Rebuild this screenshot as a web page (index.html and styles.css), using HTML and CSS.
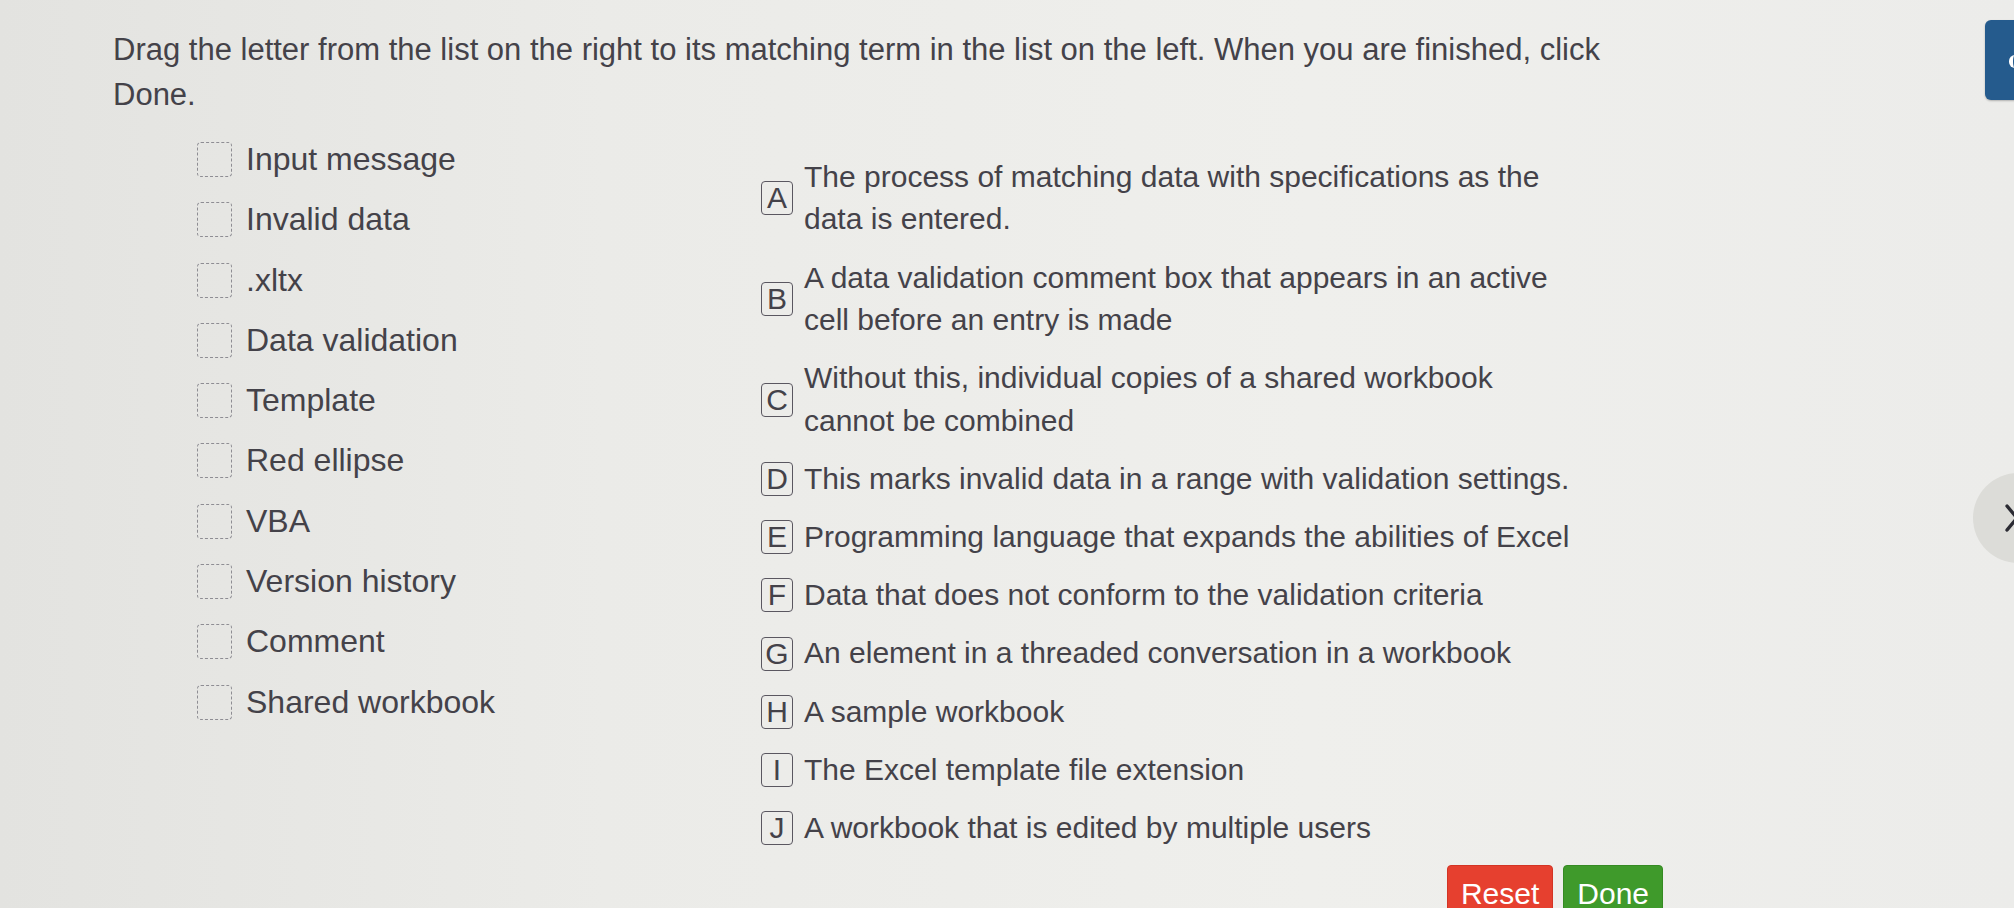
FILE: index.html
```html
<!DOCTYPE html>
<html lang="en">
<head>
<meta charset="utf-8">
<title>Matching</title>
<link rel="stylesheet" href="styles.css">
</head>
<body>
<main class="page">
  <p class="instructions">Drag the letter from the list on the right to its matching term in the list on the left. When you are finished, click Done.</p>
  <div class="match">
    <ul class="terms">
      <li class="term"><span class="drop"></span><span class="term-label">Input message</span></li>
      <li class="term"><span class="drop"></span><span class="term-label">Invalid data</span></li>
      <li class="term"><span class="drop"></span><span class="term-label">.xltx</span></li>
      <li class="term"><span class="drop"></span><span class="term-label">Data validation</span></li>
      <li class="term"><span class="drop"></span><span class="term-label">Template</span></li>
      <li class="term"><span class="drop"></span><span class="term-label">Red ellipse</span></li>
      <li class="term"><span class="drop"></span><span class="term-label">VBA</span></li>
      <li class="term"><span class="drop"></span><span class="term-label">Version history</span></li>
      <li class="term"><span class="drop"></span><span class="term-label">Comment</span></li>
      <li class="term"><span class="drop"></span><span class="term-label">Shared workbook</span></li>
    </ul>
    <ol class="defs">
      <li class="def"><span class="key">A</span><span class="def-text">The process of matching data with specifications as the data is entered.</span></li>
      <li class="def"><span class="key">B</span><span class="def-text">A data validation comment box that appears in an active cell before an entry is made</span></li>
      <li class="def"><span class="key">C</span><span class="def-text">Without this, individual copies of a shared workbook cannot be combined</span></li>
      <li class="def"><span class="key">D</span><span class="def-text">This marks invalid data in a range with validation settings.</span></li>
      <li class="def"><span class="key">E</span><span class="def-text">Programming language that expands the abilities of Excel</span></li>
      <li class="def"><span class="key">F</span><span class="def-text">Data that does not conform to the validation criteria</span></li>
      <li class="def"><span class="key">G</span><span class="def-text">An element in a threaded conversation in a workbook</span></li>
      <li class="def"><span class="key">H</span><span class="def-text">A sample workbook</span></li>
      <li class="def"><span class="key">I</span><span class="def-text">The Excel template file extension</span></li>
      <li class="def"><span class="key">J</span><span class="def-text">A workbook that is edited by multiple users</span></li>
    </ol>
  </div>
  <div class="actions">
    <button class="btn btn-reset" type="button">Reset</button>
    <button class="btn btn-done" type="button">Done</button>
  </div>
</main>
<div class="side-tab"><span class="side-tab-glyph"></span></div>
<button class="side-next" type="button" aria-label="Next">
  <svg viewBox="0 0 90 90" width="90" height="90"><path d="M34 33 L44 45 L34 57" fill="none" stroke="#2b2b33" stroke-width="3.5" stroke-linecap="round" stroke-linejoin="round"/></svg>
</button>
</body>
</html>
```

FILE: styles.css
```css
html, body {
  margin: 0;
  padding: 0;
  height: 100%;
  overflow: hidden;
}

body {
  background: linear-gradient(90deg, #e3e3e0 0%, #ebebe8 30%, #efefec 65%, #ececea 100%);
  font-family: "Liberation Sans", Arial, sans-serif;
  color: #444249;
}

.page {
  padding: 27px 0 0 113px;
}

.instructions {
  margin: 0;
  width: 1560px;
  font-size: 31px;
  line-height: 45px;
  color: #444249;
}

.match {
  display: flex;
  align-items: flex-start;
  padding-left: 84px;
}

.terms {
  list-style: none;
  margin: 21px 0 0;
  padding: 0;
  width: 564px;
  display: flex;
  flex-direction: column;
  gap: 17.3px;
}

.term {
  display: flex;
  align-items: center;
  gap: 14px;
  font-size: 32px;
  line-height: 43px;
}

.drop {
  flex: none;
  width: 33px;
  height: 33px;
  border: 1.5px dashed #8e8d93;
  border-radius: 4px;
}

.defs {
  list-style: none;
  margin: 39px 0 0;
  padding: 0;
  display: flex;
  flex-direction: column;
  gap: 15.8px;
}

.def {
  display: flex;
  align-items: center;
  gap: 11px;
  font-size: 30px;
  line-height: 42.4px;
}

.key {
  flex: none;
  width: 30px;
  height: 32px;
  border: 1.5px solid #5a5760;
  border-radius: 4px;
  font-size: 30px;
  line-height: 32px;
  text-align: center;
  color: #444249;
}

.def-text {
  width: 768px;
}

.actions {
  width: 1550px;
  margin-top: 16px;
  display: flex;
  justify-content: flex-end;
  gap: 10px;
}

.btn {
  font-family: "Liberation Sans", Arial, sans-serif;
  font-size: 30px;
  line-height: 40px;
  padding: 8px 13px;
  border-radius: 4px;
  color: #ffffff;
  cursor: pointer;
}

.btn-reset {
  background: #e6402f;
  border: 1px solid #d33424;
}

.btn-done {
  background: #3f9a2b;
  border: 1px solid #358a23;
}

.side-tab {
  position: fixed;
  top: 20px;
  left: 1985px;
  width: 60px;
  height: 80px;
  background: #255b8d;
  border-radius: 6px;
  box-shadow: 0 1px 2px rgba(0, 0, 0, 0.25);
}

.side-tab-glyph {
  position: absolute;
  left: 24px;
  top: 35px;
  width: 10px;
  height: 13px;
  border-left: 4px solid #ffffff;
  border-radius: 6px 0 0 6px;
}

.side-next {
  position: fixed;
  top: 473px;
  left: 1973px;
  width: 90px;
  height: 90px;
  padding: 0;
  border: none;
  border-radius: 50%;
  background: #dcdcd8;
}

.side-next svg {
  display: block;
}
```
